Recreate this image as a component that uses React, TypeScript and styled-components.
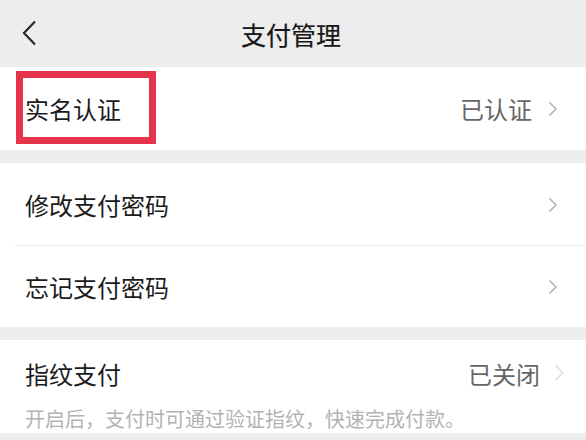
import styled, { createGlobalStyle } from 'styled-components';

const GlobalStyle = createGlobalStyle`
  html, body {
    margin: 0;
    padding: 0;
    background: #ededed;
  }
  body {
    font-family: "Noto Sans CJK SC", "Noto Sans", sans-serif;
  }
`;

const Page = styled.div`
  width: 586px;
  height: 440px;
  overflow: hidden;
  background: #ededed;
  display: flex;
  flex-direction: column;
`;

const Header = styled.header`
  height: 67px;
  flex-shrink: 0;
  position: relative;
  display: flex;
  align-items: center;
  justify-content: center;
`;

const BackButton = styled.button`
  position: absolute;
  left: 20px;
  top: 19px;
  width: 18px;
  height: 28px;
  padding: 0;
  border: none;
  background: none;
  display: flex;
  align-items: center;
  justify-content: center;
`;

const Title = styled.h1`
  margin: 0 4px 0 0;
  font-size: 25px;
  font-weight: 400;
  color: #161616;
  -webkit-text-stroke: 0.2px #161616;
`;

const Group = styled.section<{ $gap?: number }>`
  background: #fff;
  margin-bottom: ${(p) => p.$gap ?? 13}px;
  flex-shrink: 0;
`;

const Row = styled.div<{ $height: number; $divider?: boolean }>`
  position: relative;
  height: ${(p) => p.$height}px;
  padding: 0 28px 0 25px;
  display: flex;
  align-items: center;
  ${(p) =>
    p.$divider &&
    `
    &:after {
      content: '';
      position: absolute;
      left: 15px;
      right: 0;
      bottom: 0;
      height: 1px;
      background: #ececec;
    }
  `}
`;

const Label = styled.span`
  flex: 1;
  font-size: 24px;
  color: #1b1b1b;
`;

const Value = styled.span<{ $gap?: number }>`
  font-size: 24px;
  color: #666;
  margin-right: ${(p) => p.$gap ?? 16}px;
`;

const Highlight = styled.div`
  position: absolute;
  left: 16px;
  top: 4px;
  width: 140px;
  height: 73px;
  box-sizing: border-box;
  border: 7px solid #e6344b;
  pointer-events: none;
`;

const FingerprintRow = styled.div`
  padding: 13px 22px 0 25px;
`;

const FingerprintHead = styled.div`
  display: flex;
  align-items: center;
  height: 40px;
`;

const Hint = styled.p`
  margin: 11px 0 0;
  font-size: 20px;
  color: #b3b3b3;
  white-space: nowrap;
`;

const Chevron = ({ faint }: { faint?: boolean }) => (
  <svg width="10" height={faint ? 18 : 16} viewBox={faint ? '0 0 10 18' : '0 0 10 16'}>
    <path
      d={faint ? 'M1.5 1.5 L8.5 9 L1.5 16.5' : 'M1.5 1.5 L8 8 L1.5 14.5'}
      fill="none"
      stroke={faint ? '#dedede' : '#b4b4b4'}
      strokeWidth="1.6"
    />
  </svg>
);

const BackIcon = () => (
  <svg width="16" height="28" viewBox="0 0 16 28">
    <path d="M14 2.5 L3 14 L14 25.5" fill="none" stroke="#2a2a2a" strokeWidth="2.2" />
  </svg>
);

const App = () => {
  return (
    <Page>
      <GlobalStyle />
      <Header>
        <BackButton aria-label="返回">
          <BackIcon />
        </BackButton>
        <Title>支付管理</Title>
      </Header>

      <Group>
        <Row $height={83}>
          <Label>实名认证</Label>
          <Value>已认证</Value>
          <Chevron />
          <Highlight />
        </Row>
      </Group>

      <Group>
        <Row $height={83} $divider>
          <Label>修改支付密码</Label>
          <Chevron />
        </Row>
        <Row $height={81}>
          <Label>忘记支付密码</Label>
          <Chevron />
        </Row>
      </Group>

      <Group $gap={0}>
        <FingerprintRow>
          <FingerprintHead>
            <Label>指纹支付</Label>
            <Value $gap={14}>已关闭</Value>
            <Chevron faint />
          </FingerprintHead>
          <Hint>开启后，支付时可通过验证指纹，快速完成付款。</Hint>
        </FingerprintRow>
      </Group>
    </Page>
  );
};

export default App;
